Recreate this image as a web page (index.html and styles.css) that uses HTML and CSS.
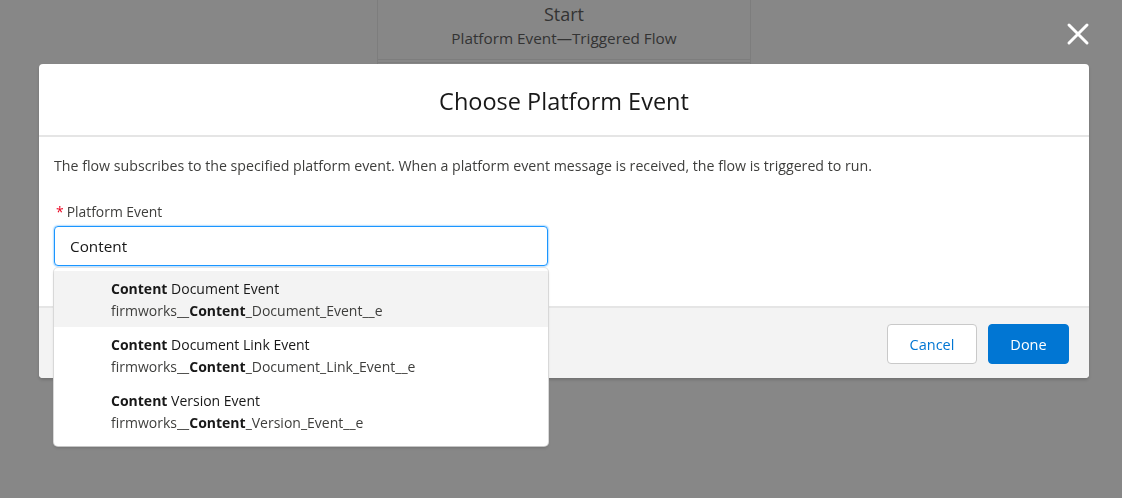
FILE: index.html
```html
<!DOCTYPE html>
<html lang="en">
<head>
<meta charset="utf-8">
<title>Choose Platform Event</title>
<link rel="stylesheet" href="styles.css">
</head>
<body>
<div class="canvas">
  <div class="start-card">
    <div class="start-title">Start</div>
    <div class="start-sub">Platform Event—Triggered Flow</div>
    <div class="start-rule"></div>
  </div>
</div>

<div class="backdrop">
  <button class="close" aria-label="Close">
    <svg width="24" height="24" viewBox="0 0 24 24"><path d="M3 3 L21 21 M21 3 L3 21" stroke="#fff" stroke-width="3" stroke-linecap="round" fill="none"/></svg>
  </button>
  <section class="modal">
    <header class="modal-header">
      <h2>Choose Platform Event</h2>
    </header>
    <div class="modal-body">
      <p class="help">The flow subscribes to the specified platform event. When a platform event message is received, the flow is triggered to run.</p>
      <div class="field">
        <label class="label"><abbr class="req">*</abbr>Platform Event</label>
        <div class="combo">
          <div class="input">Content</div>
          <ul class="listbox">
            <li class="option active">
              <span class="opt-title"><b>Content</b> Document Event</span>
              <span class="opt-sub">firmworks__<b>Content</b>_Document_Event__e</span>
            </li>
            <li class="option">
              <span class="opt-title"><b>Content</b> Document Link Event</span>
              <span class="opt-sub">firmworks__<b>Content</b>_Document_Link_Event__e</span>
            </li>
            <li class="option">
              <span class="opt-title"><b>Content</b> Version Event</span>
              <span class="opt-sub">firmworks__<b>Content</b>_Version_Event__e</span>
            </li>
          </ul>
        </div>
      </div>
    </div>
    <footer class="modal-footer">
      <button class="btn btn-neutral">Cancel</button>
      <button class="btn btn-brand">Done</button>
    </footer>
  </section>
</div>
</body>
</html>
```

FILE: styles.css
```css
* { box-sizing: border-box; }
html, body { margin: 0; padding: 0; }
body {
  width: 1122px;
  height: 498px;
  overflow: hidden;
  background: #878787;
  font-family: "Open Sans", "Noto Sans", sans-serif;
  color: #181818;
}
.canvas {
  padding-left: 377px;
}
.start-card {
  width: 374px;
  height: 90px;
  border: 1px solid #7d7d7d;
  border-top: none;
  text-align: center;
  color: #333;
}
.start-title {
  font-size: 18px;
  line-height: 24px;
  padding-top: 2px;
}
.start-sub {
  font-size: 15.3px;
  line-height: 22px;
  margin-top: 1px;
}
.start-rule {
  margin-top: 10px;
  height: 4px;
  border-top: 1px solid #7d7d7d;
  border-bottom: 1px solid #7d7d7d;
}
.backdrop {
  position: fixed;
  inset: 0;
  padding: 64px 0 0 39px;
}
.close {
  position: absolute;
  top: 22px;
  left: 1066px;
  width: 24px;
  height: 24px;
  padding: 0;
  border: 0;
  background: none;
}
.close svg { display: block; }
.modal {
  width: 1050px;
  background: #fff;
  border-radius: 4px;
  box-shadow: 0 2px 3px rgba(0,0,0,.16);
}
.modal-header {
  height: 73px;
  border-bottom: 2px solid #e5e5e5;
  display: flex;
  align-items: center;
  justify-content: center;
}
.modal-header h2 {
  margin: 0;
  font-weight: 400;
  font-size: 23.5px;
  line-height: 30px;
  color: #181818;
  padding-top: 2px;
}
.modal-body {
  padding: 18px 15px 40px;
}
.help {
  margin: 0;
  font-size: 14.2px;
  line-height: 22px;
  color: #3e3e3c;
}
.field { margin-top: 25px; }
.label {
  display: block;
  font-size: 13.9px;
  line-height: 20px;
  color: #3e3e3c;
  margin-bottom: 4px;
}
.req {
  color: #ea001e;
  text-decoration: none;
  margin: 0 3px 0 2px;
}
.combo {
  position: relative;
  width: 494px;
}
.input {
  height: 40px;
  border: 1px solid #1b96ff;
  border-radius: 4px;
  box-shadow: 0 0 2px #1b96ff;
  padding: 0 15px;
  font-size: 15.3px;
  line-height: 38px;
  color: #181818;
}
.listbox {
  position: absolute;
  top: 42px;
  left: 0;
  width: 494px;
  margin: 0;
  padding: 3px 0 7px;
  list-style: none;
  background: #fff;
  border-radius: 4px;
  box-shadow: 0 2px 3px rgba(0,0,0,.16), 0 0 0 1px #e5e5e5;
  z-index: 2;
}
.option {
  display: flex;
  flex-direction: column;
  gap: 2px;
  padding: 8px 12px 6px 57px;
  height: 56px;
  font-size: 14px;
  color: #3e3e3c;
}
.option.active { background: #f3f3f3; }
.opt-title, .opt-sub { line-height: 20px; white-space: nowrap; }
.option b { font-weight: 700; color: #181818; }
.opt-title { color: #181818; }
.modal-footer {
  height: 72px;
  background: #f3f3f3;
  border-top: 2px solid #e5e5e5;
  border-radius: 0 0 4px 4px;
  display: flex;
  justify-content: flex-end;
  align-items: center;
  gap: 11px;
  padding: 2px 20px 0;
}
.btn {
  height: 40px;
  border-radius: 4px;
  font-family: inherit;
  font-size: 14.5px;
  padding: 0 10px;
  cursor: pointer;
}
.btn-neutral {
  width: 90px;
  background: #fff;
  color: #0176d3;
  border: 1px solid #c9c9c9;
}
.btn-brand {
  width: 81px;
  background: #0176d3;
  color: #fff;
  border: 1px solid #0176d3;
}
```
